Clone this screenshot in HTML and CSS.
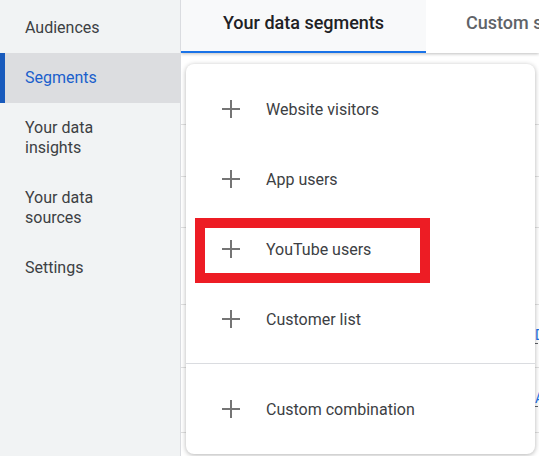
FILE: index.html
```html
<!DOCTYPE html>
<html lang="en">
<head>
    <meta charset="UTF-8">
    <meta name="viewport" content="width=device-width, initial-scale=1.0">
    <title>Segments</title>
    <link rel="stylesheet" href="styles.css">
</head>
<body>
    <div class="layout">
        <nav class="sidebar">
            <a class="nav-item">Audiences</a>
            <a class="nav-item active">Segments</a>
            <a class="nav-item">Your data<br>insights</a>
            <a class="nav-item">Your data<br>sources</a>
            <a class="nav-item">Settings</a>
        </nav>

        <main class="main">
            <div class="tabs">
                <div class="tab selected">Your data segments</div>
                <div class="tab">Custom segments</div>
            </div>

            <!-- таблица под меню -->
            <div class="table">
                <div class="row r1"></div>
                <div class="row r2"></div>
                <div class="row r3"></div>
                <div class="row r4"></div>
                <div class="row r5"><span class="link">Details</span></div>
                <div class="row r6"><span class="link">Apply</span></div>
            </div>

            <div class="menu">
                <div class="menu-item"><svg class="plus" viewBox="0 0 20 20"><path d="M10 1v18M1 10h18"/></svg>Website visitors</div>
                <div class="menu-item"><svg class="plus" viewBox="0 0 20 20"><path d="M10 1v18M1 10h18"/></svg>App users</div>
                <div class="menu-item"><svg class="plus" viewBox="0 0 20 20"><path d="M10 1v18M1 10h18"/></svg>YouTube users</div>
                <div class="menu-item"><svg class="plus" viewBox="0 0 20 20"><path d="M10 1v18M1 10h18"/></svg>Customer list</div>
                <div class="divider"></div>
                <div class="menu-item"><svg class="plus" viewBox="0 0 20 20"><path d="M10 1v18M1 10h18"/></svg>Custom combination</div>
            </div>

            <div class="highlight"></div>
        </main>
    </div>
</body>
</html>
```

FILE: styles.css
```css
body {
    font-family: Roboto, "Liberation Sans", Arial, sans-serif;
    margin: 0;
    padding: 0;
    background-color: #fff;
    overflow: hidden;
}

.layout {
    display: flex;
    height: 456px;
}

.sidebar {
    width: 180px;
    flex-shrink: 0;
    background-color: #f1f3f4;
    border-right: 1px solid #dadce0;
    padding-top: 3px;
}

.nav-item {
    display: block;
    padding: 15px 25px;
    font-size: 16px;
    line-height: 20px;
    color: #3c4043;
    border-left: 5px solid transparent;
    margin-left: -5px;
}

.nav-item.active {
    background-color: #dcdde0;
    border-left-color: #185abc;
    margin-left: 0;
    padding-left: 20px;
    color: #1a5fcc;
}

.main {
    flex: 1;
    position: relative;
    overflow: hidden;
}

.tabs {
    display: flex;
    height: 53px;
    box-shadow: 0 1px 3px rgba(0, 0, 0, 0.25);
    position: relative;
    z-index: 1;
    background-color: #fff;
}

.tab {
    flex-shrink: 0;
    box-sizing: border-box;
    height: 53px;
    padding-top: 12px;
    font-size: 18px;
    font-weight: 500;
    color: #5f6368;
    white-space: nowrap;
}

.tab.selected {
    width: 245px;
    text-align: center;
    background-color: #f8f9fa;
    border-bottom: 2px solid #1a73e8;
    color: #202124;
}

.tab + .tab {
    padding-left: 40px;
}

.row {
    border-bottom: 1px solid #e0e0e0;
    box-sizing: border-box;
    position: relative;
}

.r1 { height: 72px; }
.r2 { height: 52px; }
.r3 { height: 51px; }
.r4 { height: 77px; }
.r5 { height: 63px; }
.r6 { height: 65px; }

.link {
    position: absolute;
    left: 354px;
    top: 22px;
    font-size: 14px;
    color: #1a73e8;
    border-bottom: 1px dashed #5f6368;
}

.menu {
    position: absolute;
    left: 5px;
    top: 64px;
    width: 349px;
    height: 390px;
    box-sizing: border-box;
    padding: 10px 0;
    background-color: #fff;
    border-radius: 8px;
    box-shadow: 0 1px 5px rgba(0, 0, 0, 0.3);
    z-index: 2;
}

.menu-item {
    display: flex;
    align-items: center;
    height: 70px;
    padding-left: 35px;
    font-size: 16px;
    color: #3c4043;
}

.plus {
    width: 20px;
    height: 20px;
    margin-right: 25px;
    stroke: #757575;
    stroke-width: 2;
    fill: none;
}

.divider {
    height: 1px;
    background-color: #dadce0;
    margin: 9px 0 10px;
}

.highlight {
    position: absolute;
    left: 14px;
    top: 218px;
    width: 235px;
    height: 65px;
    box-sizing: border-box;
    border: 10px solid #ed1c24;
    z-index: 3;
}
```
